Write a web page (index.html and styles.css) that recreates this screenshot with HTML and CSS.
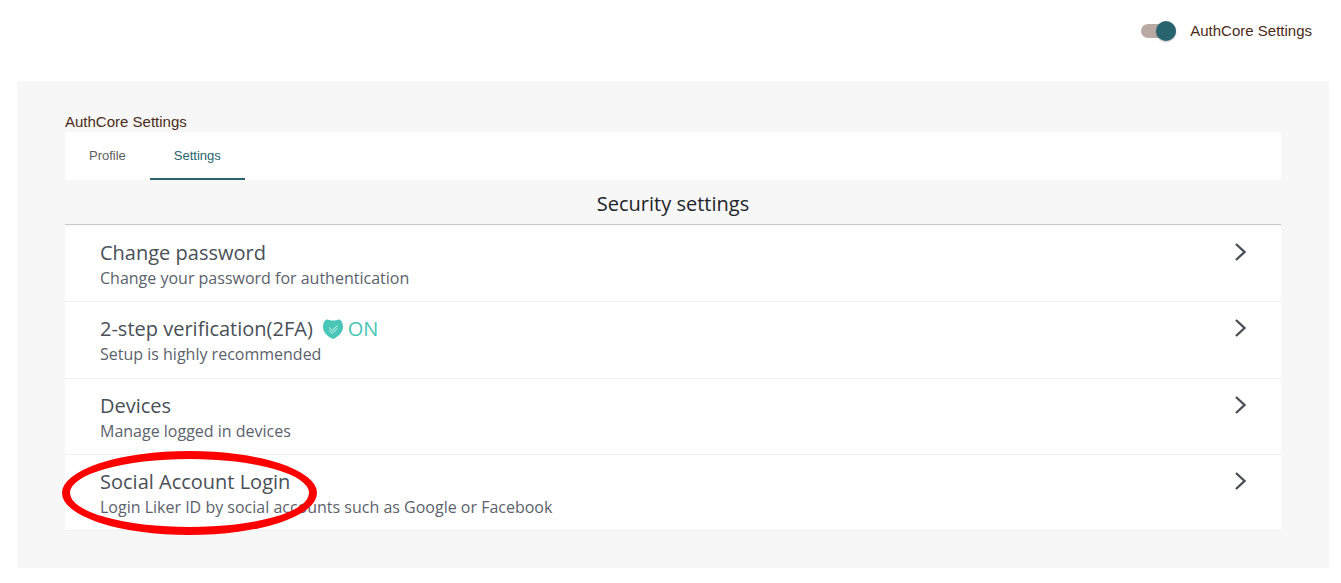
FILE: index.html
```html
<!DOCTYPE html>
<html lang="en">
<head>
<meta charset="utf-8">
<title>AuthCore Settings</title>
<link rel="stylesheet" href="styles.css">
</head>
<body>
<header class="topbar">
  <label class="switch" for="authcore">
    <input class="switch-input" type="checkbox" role="switch" id="authcore" checked>
    <span>AuthCore Settings</span>
  </label>
</header>
<main class="panel">
  <h1 class="panel-title">AuthCore Settings</h1>
  <nav class="tabs">
    <a class="tab" href="#profile">Profile</a>
    <a class="tab tab-active" href="#settings" aria-current="page">Settings</a>
  </nav>
  <h2 class="section-title">Security settings</h2>
  <ul class="list">
    <li class="item">
      <a class="row" href="#password">
        <span class="text"><span class="title">Change password</span><span class="desc">Change your password for authentication</span></span>
        <svg class="chevron" viewBox="0 0 12 20"><path d="M1 2 L9.500 10 L1 18"/></svg>
      </a>
    </li>
    <li class="item">
      <a class="row row-status" href="#two-step">
        <span class="text">
          <span class="title title-status">2-step verification(2FA)
            <span class="status">
              <svg class="shield" viewBox="0 0 20 20"><path class="shield-body" d="M3 .8 Q4.500 0 6 .9 Q10 2 14 .9 Q15.500 0 17 .8 Q20 3 20 8 C20 13 16.500 16 13 18.500 Q10 21 7 18.500 C3.500 16 0 13 0 8 Q0 3 3 .8Z"/><path class="shield-check" d="M6 8.500 L9.500 11.500 L14.500 6.500 M6 11.300 L9.500 14.300 L14.500 9.300"/></svg>
              ON</span></span>
          <span class="desc">Setup is highly recommended</span>
        </span>
        <svg class="chevron" viewBox="0 0 12 20"><path d="M1 2 L9.500 10 L1 18"/></svg>
      </a>
    </li>
    <li class="item">
      <a class="row" href="#devices">
        <span class="text"><span class="title">Devices</span><span class="desc">Manage logged in devices</span></span>
        <svg class="chevron" viewBox="0 0 12 20"><path d="M1 2 L9.500 10 L1 18"/></svg>
      </a>
    </li>
    <li class="item">
      <a class="row" href="#social">
        <span class="text"><span class="title">Social Account Login</span><span class="desc">Login Liker ID by social accounts such as Google or Facebook</span></span>
        <svg class="chevron" viewBox="0 0 12 20"><path d="M1 2 L9.500 10 L1 18"/></svg>
      </a>
      <span class="highlight"></span>
    </li>
  </ul>
</main>
</body>
</html>
```
FILE: styles.css
```css
* { box-sizing: border-box; }
body {
  margin: 0;
  background: #fff;
  font-family: "Liberation Sans", Arial, sans-serif;
}
a { color: inherit; text-decoration: none; }

.topbar {
  display: flex;
  justify-content: flex-end;
  padding: 21px 29px 40px 16px;
}
.switch {
  display: flex;
  align-items: center;
  gap: 14px;
  font-size: 15px;
  line-height: 20px;
  color: #4b2c17;
}
.switch-input {
  appearance: none;
  display: flex;
  align-items: center;
  justify-content: flex-end;
  width: 35px;
  height: 14px;
  margin: 0;
  border-radius: 7px;
  background: #b9aaa3;
}
.switch-input::before {
  content: "";
  flex: none;
  width: 20px;
  height: 20px;
  border-radius: 50%;
  background: #28646e;
  box-shadow: 0 1px 2px rgba(0, 0, 0, .25);
}

.panel {
  margin: 0 12px 15px 17px;
  padding: 31px 48px 37px;
  background: #f7f7f7;
}
.panel-title {
  margin: 0;
  font-size: 15px;
  font-weight: 400;
  line-height: 20px;
  color: #4b2c17;
}
.tabs {
  display: flex;
  height: 48px;
  background: #fff;
}
.tab {
  display: flex;
  align-items: center;
  padding: 0 24px;
  border-bottom: 2px solid transparent;
  font-size: 13px;
  color: #5e5e5e;
}
.tab-active {
  color: #28646e;
  border-color: #28646e;
}

.section-title {
  margin: 0;
  padding: 10px 0 6px;
  font-family: "Open Sans", sans-serif;
  font-size: 20px;
  font-weight: 500;
  line-height: 28px;
  text-align: center;
  color: #212529;
}
.list {
  margin: 0;
  padding: 1px 0 0;
  list-style: none;
  border-top: 1px solid #c8c8c8;
  font-family: "Open Sans", sans-serif;
}
.item {
  position: relative;
  background: #fff;
  border-bottom: 1px solid #f0f0f0;
}
.row {
  display: flex;
  align-items: flex-start;
  justify-content: space-between;
  padding: 12px 34px 11px 35px;
}
.row-status { padding-bottom: 12px; }
.text {
  display: flex;
  flex-direction: column;
  padding: 1px 0;
}
.title {
  font-size: 20px;
  font-weight: 500;
  line-height: 28px;
  color: #495057;
}
.title-status {
  display: flex;
  gap: 10px;
}
.status {
  display: flex;
  align-items: center;
  gap: 5px;
  color: #48c6b7;
}
.desc {
  font-size: 16px;
  line-height: 22px;
  color: #5b626b;
}
.shield { width: 20px; height: 20px; }
.shield-body { fill: #48c6b7; }
.shield-check { fill: none; stroke: #d9f6f1; stroke-width: 1; }
.chevron {
  width: 12px;
  height: 20px;
  margin-top: 4px;
  fill: none;
  stroke: #495057;
  stroke-width: 2.4;
}
.highlight {
  position: absolute;
  top: -4px;
  left: -3px;
  width: 255px;
  height: 84px;
  border: 8px solid #f00;
  border-radius: 50%;
  pointer-events: none;
}
```
